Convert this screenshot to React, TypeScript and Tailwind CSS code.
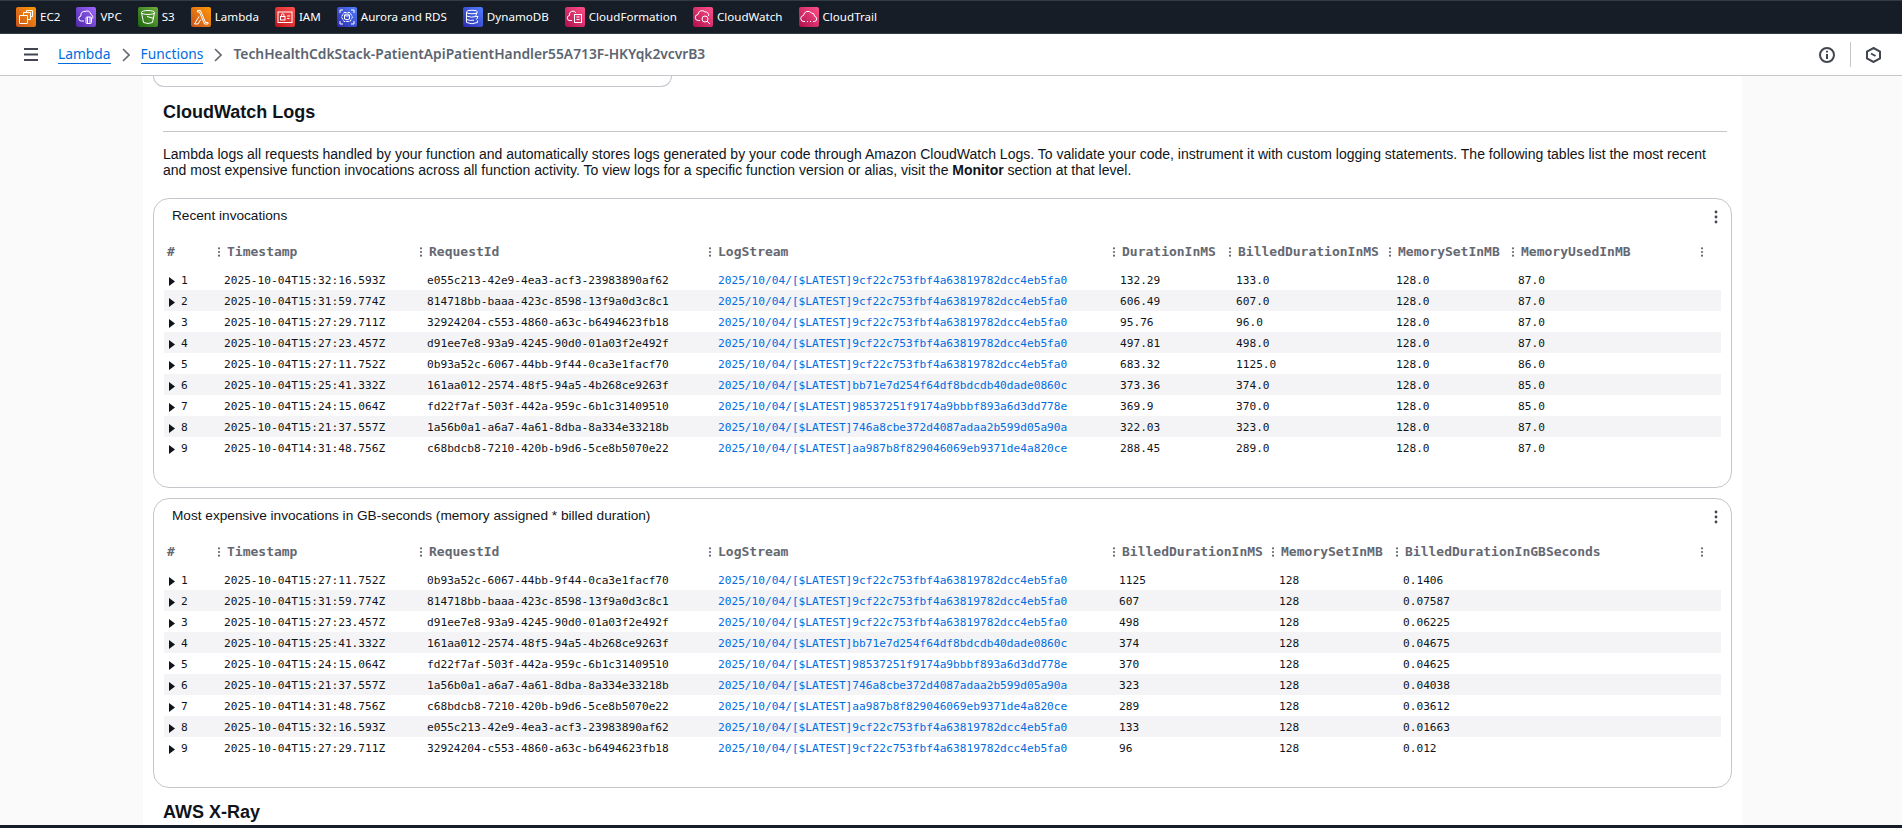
import React from 'react';

const services = [
    {
        name: 'EC2',
        bg: 'from-[#c8511b] to-[#ff9900]',
        icon: (
            <>
                <rect x="3.5" y="8.5" width="8" height="8" rx="0.5" />
                <path d="M7.5 8.5V5.5h7v7h-3M10.5 5.5V3.5h6v6h-2" />
            </>
        ),
    },
    {
        name: 'VPC',
        bg: 'from-[#4d27a8] to-[#a166ff]',
        icon: (
            <>
                <path d="M8 14H5.5a2.5 2.5 0 0 1-.5-5 3.5 3.5 0 0 1 4-4.5 4 4 0 0 1 6 3 2.8 2.8 0 0 1 1.5 4" />
                <rect x="10" y="10" width="5.5" height="6.5" rx="1" />
                <path d="M11.5 10V16.5M14 10V16.5" />
            </>
        ),
    },
    {
        name: 'S3',
        bg: 'from-[#1b660f] to-[#6cae3e]',
        icon: (
            <>
                <ellipse cx="10" cy="5.5" rx="6.5" ry="2" />
                <path d="M3.5 5.5L5.5 15.5Q10 17.5 14.5 15.5L16.5 5.5" />
                <path d="M9 9.5l7 2" />
            </>
        ),
    },
    {
        name: 'Lambda',
        bg: 'from-[#c8511b] to-[#ff9900]',
        icon: <path d="M6.5 3.5H9.5L14.5 15.5H17V17H13.5L8.5 5H6.5ZM8 9.5L3.5 17H7L9.8 12.5" />,
    },
    {
        name: 'IAM',
        bg: 'from-[#bd0816] to-[#ff5252]',
        icon: (
            <>
                <rect x="3" y="5" width="14" height="10.5" />
                <rect x="5.5" y="9.5" width="4.5" height="3.5" />
                <path d="M6.5 9.5V8a1.2 1.2 0 0 1 2.5 0v1.5M12 9h3M12 11.5h2.5" />
            </>
        ),
    },
    {
        name: 'Aurora and RDS',
        bg: 'from-[#2e27ad] to-[#527fff]',
        icon: (
            <>
                <path d="M3 6V3h3M14 3h3v3M3 14v3h3M14 17h3v-3" />
                <path d="M7 5.5h6l2.5 4.5-2.5 4.5H7L4.5 10Z" strokeDasharray="2.5 1" />
                <ellipse cx="10" cy="8" rx="2.5" ry="1" />
                <path d="M7.5 8v4q2.5 1.5 5 0V8" />
            </>
        ),
    },
    {
        name: 'DynamoDB',
        bg: 'from-[#2e27ad] to-[#527fff]',
        icon: (
            <>
                <ellipse cx="9" cy="5" rx="5.5" ry="1.8" />
                <path d="M3.5 5v10.5q5.5 2.5 11 0v-2M3.5 9q5.5 2 9 .5M3.5 12.5q4 1.5 7.5.7" />
                <path d="M14 5.5l-1.5 4h2.5l-1.5 3" />
            </>
        ),
    },
    {
        name: 'CloudFormation',
        bg: 'from-[#b0084d] to-[#ff4f8b]',
        icon: (
            <>
                <path d="M7 13.5H5a2.5 2.5 0 0 1-.5-5A3.5 3.5 0 0 1 11 6" />
                <rect x="9.5" y="7.5" width="7" height="8" />
                <path d="M11.5 10h3M11.5 12.5h3" />
            </>
        ),
    },
    {
        name: 'CloudWatch',
        bg: 'from-[#b0084d] to-[#ff4f8b]',
        icon: (
            <>
                <path d="M7 13.5H5.5a3 3 0 0 1-.5-6A4 4 0 0 1 12 5a3 3 0 0 1 3.5 4" />
                <circle cx="12" cy="12" r="3" />
                <path d="M14.2 14.2L17 17" />
            </>
        ),
    },
    {
        name: 'CloudTrail',
        bg: 'from-[#b0084d] to-[#ff4f8b]',
        icon: (
            <path
                d="M6 14.5H5a3 3 0 0 1-.5-6A4.5 4.5 0 0 1 12.5 6a3 3 0 0 1 3 3.2 2.7 2.7 0 0 1 0 5.3H14M8 14.5h1M11 14.5h1"
            />
        ),
    },
];

const stream1 = '2025/10/04/[$LATEST]9cf22c753fbf4a63819782dcc4eb5fa0';
const stream2 = '2025/10/04/[$LATEST]bb71e7d254f64df8bdcdb40dade0860c';
const stream3 = '2025/10/04/[$LATEST]98537251f9174a9bbbf893a6d3dd778e';
const stream4 = '2025/10/04/[$LATEST]746a8cbe372d4087adaa2b599d05a90a';
const stream5 = '2025/10/04/[$LATEST]aa987b8f829046069eb9371de4a820ce';

const recentRows = [
    ['2025-10-04T15:32:16.593Z', 'e055c213-42e9-4ea3-acf3-23983890af62', stream1, '132.29', '133.0', '128.0', '87.0'],
    ['2025-10-04T15:31:59.774Z', '814718bb-baaa-423c-8598-13f9a0d3c8c1', stream1, '606.49', '607.0', '128.0', '87.0'],
    ['2025-10-04T15:27:29.711Z', '32924204-c553-4860-a63c-b6494623fb18', stream1, '95.76', '96.0', '128.0', '87.0'],
    ['2025-10-04T15:27:23.457Z', 'd91ee7e8-93a9-4245-90d0-01a03f2e492f', stream1, '497.81', '498.0', '128.0', '87.0'],
    ['2025-10-04T15:27:11.752Z', '0b93a52c-6067-44bb-9f44-0ca3e1facf70', stream1, '683.32', '1125.0', '128.0', '86.0'],
    ['2025-10-04T15:25:41.332Z', '161aa012-2574-48f5-94a5-4b268ce9263f', stream2, '373.36', '374.0', '128.0', '85.0'],
    ['2025-10-04T15:24:15.064Z', 'fd22f7af-503f-442a-959c-6b1c31409510', stream3, '369.9', '370.0', '128.0', '85.0'],
    ['2025-10-04T15:21:37.557Z', '1a56b0a1-a6a7-4a61-8dba-8a334e33218b', stream4, '322.03', '323.0', '128.0', '87.0'],
    ['2025-10-04T14:31:48.756Z', 'c68bdcb8-7210-420b-b9d6-5ce8b5070e22', stream5, '288.45', '289.0', '128.0', '87.0'],
];

const expensiveRows = [
    ['2025-10-04T15:27:11.752Z', '0b93a52c-6067-44bb-9f44-0ca3e1facf70', stream1, '1125', '128', '0.1406'],
    ['2025-10-04T15:31:59.774Z', '814718bb-baaa-423c-8598-13f9a0d3c8c1', stream1, '607', '128', '0.07587'],
    ['2025-10-04T15:27:23.457Z', 'd91ee7e8-93a9-4245-90d0-01a03f2e492f', stream1, '498', '128', '0.06225'],
    ['2025-10-04T15:25:41.332Z', '161aa012-2574-48f5-94a5-4b268ce9263f', stream2, '374', '128', '0.04675'],
    ['2025-10-04T15:24:15.064Z', 'fd22f7af-503f-442a-959c-6b1c31409510', stream3, '370', '128', '0.04625'],
    ['2025-10-04T15:21:37.557Z', '1a56b0a1-a6a7-4a61-8dba-8a334e33218b', stream4, '323', '128', '0.04038'],
    ['2025-10-04T14:31:48.756Z', 'c68bdcb8-7210-420b-b9d6-5ce8b5070e22', stream5, '289', '128', '0.03612'],
    ['2025-10-04T15:32:16.593Z', 'e055c213-42e9-4ea3-acf3-23983890af62', stream1, '133', '128', '0.01663'],
    ['2025-10-04T15:27:29.711Z', '32924204-c553-4860-a63c-b6494623fb18', stream1, '96', '128', '0.012'],
];

function Kebab({ large }: { large?: boolean }) {
    if (large) {
        return (
            <svg width="4" height="14" viewBox="0 0 4 14" className="shrink-0 text-[#424650]" fill="currentColor">
                <circle cx="2" cy="2" r="1.4" />
                <circle cx="2" cy="7" r="1.4" />
                <circle cx="2" cy="12" r="1.4" />
            </svg>
        );
    }
    return (
        <svg width="4" height="10" viewBox="0 0 4 10" className="shrink-0 text-[#656871]" fill="currentColor">
            <circle cx="2" cy="1.3" r="1.1" />
            <circle cx="2" cy="5" r="1.1" />
            <circle cx="2" cy="8.7" r="1.1" />
        </svg>
    );
}

function LogTable({
    columns,
    rows,
    headGrid,
    rowGrid,
}: {
    columns: string[];
    rows: string[][];
    headGrid: string;
    rowGrid: string;
}) {
    return (
        <div className="mt-[18px] font-['DejaVu_Sans_Mono',monospace]">
            <div className={`grid h-[20px] items-center text-[13px] font-bold text-[#656871] ${headGrid}`}>
                <span className="pl-[3px]">#</span>
                {columns.map((col) => (
                    <span key={col} className="flex items-center gap-[6px] whitespace-nowrap">
                        <Kebab />
                        {col}
                    </span>
                ))}
                <Kebab />
            </div>
            <div className="mt-[7px]">
                {rows.map((row, i) => (
                    <div
                        key={row[1]}
                        className={`grid h-[21px] items-center pt-[3px] text-[11.16px] text-[#0f141a] ${rowGrid} ${i % 2 === 1 ? 'bg-[#f4f4f6]' : ''}`}
                    >
                        <span className="flex items-center gap-[6px] pl-[5px] pt-[1px]">
                            <svg width="6" height="9" viewBox="0 0 6 9" fill="#0f141a" className="shrink-0">
                                <path d="M0 0L6 4.5L0 9Z" />
                            </svg>
                            {i + 1}
                        </span>
                        {row.map((cell, j) => (
                            <span key={j} className={`whitespace-nowrap ${j === 2 ? 'text-[#006ce0]' : ''}`}>
                                {cell}
                            </span>
                        ))}
                    </div>
                ))}
            </div>
        </div>
    );
}

function LogCard({ title, children }: { title: string; children: React.ReactNode }) {
    return (
        <section className="h-[290px] rounded-2xl border border-[#c6c6cd] px-[10px] pt-[9px]">
            <div className="flex h-[16px] items-start justify-between pl-[8px] pr-[3px]">
                <h3 className="text-[13.65px] leading-[16px] text-[#0f141a]">{title}</h3>
                <span className="mt-[2px]">
                    <Kebab large />
                </span>
            </div>
            {children}
        </section>
    );
}

export default function App() {
    return (
        <div className="flex h-screen flex-col overflow-hidden bg-[#fafafa] font-['Liberation_Sans',Arial,sans-serif]">
            <nav className="flex h-[34px] shrink-0 items-center gap-4 border-y border-y-[#333b45] bg-[#161d26] pl-4 font-['Noto_Sans',sans-serif] text-[11.6px] text-white">
                {services.map((s) => (
                    <a key={s.name} className="flex items-center gap-1 whitespace-nowrap">
                        <span className={`flex h-5 w-5 items-center justify-center rounded-[2px] bg-linear-to-tr ${s.bg}`}>
                            <svg width="20" height="20" viewBox="0 0 20 20" fill="none" stroke="white" strokeWidth="1">
                                {s.icon}
                            </svg>
                        </span>
                        {s.name}
                    </a>
                ))}
            </nav>

            <header className="flex h-[42px] shrink-0 items-center border-b border-[#c6c6cd] bg-white pl-6 pr-[21px] font-['Noto_Sans',sans-serif] text-[13.8px]">
                <svg width="14" height="13" viewBox="0 0 14 13" className="mr-5 shrink-0" stroke="#424650" strokeWidth="2">
                    <path d="M0 1h14M0 6.5h14M0 12h14" />
                </svg>
                <a className="border-b border-[#006ce0] leading-[18px] text-[#006ce0]">Lambda</a>
                <svg width="8" height="14" viewBox="0 0 8 14" className="mx-[11px] shrink-0" fill="none" stroke="#656871" strokeWidth="1.6">
                    <path d="M1 1l6 6-6 6" />
                </svg>
                <a className="border-b border-[#006ce0] leading-[18px] text-[#006ce0]">Functions</a>
                <svg width="8" height="14" viewBox="0 0 8 14" className="mx-[11px] shrink-0" fill="none" stroke="#656871" strokeWidth="1.6">
                    <path d="M1 1l6 6-6 6" />
                </svg>
                <span className="font-semibold text-[#5b6470]">TechHealthCdkStack-PatientApiPatientHandler55A713F-HKYqk2vcvrB3</span>
                <div className="ml-auto flex items-center">
                    <svg width="16" height="16" viewBox="0 0 16 16" fill="none" stroke="#424650" strokeWidth="2">
                        <circle cx="8" cy="8" r="7" />
                        <path d="M8 7v5M8 3.8v1.6" />
                    </svg>
                    <span className="mx-[15px] h-[25px] w-px bg-[#c6c6cd]" />
                    <svg width="15" height="16" viewBox="0 0 15 16" fill="none" stroke="#424650" strokeWidth="2">
                        <path d="M7.5 1L14 4.5v7L7.5 15 1 11.5v-7Z" />
                        <path d="M5 6.5L9.5 9" />
                    </svg>
                </div>
            </header>

            <main className="ml-[143px] min-h-0 w-[1599px] flex-1 overflow-hidden bg-white px-[10px]">
                <div className="h-[11px] w-[519px] rounded-b-2xl border border-t-0 border-[#c6c6cd]" />

                <div className="pl-[10px] pr-[5px]">
                    <h2 className="mt-[13px] border-b border-[#c6c6cd] pb-[7px] text-[18px] leading-[24px] font-bold text-[#0f141a]">CloudWatch Logs</h2>
                    <p className="mt-[14px] text-[14px] leading-[16px] text-[#0f141a]">
                        Lambda logs all requests handled by your function and automatically stores logs generated by your code through Amazon CloudWatch Logs. To validate your code, instrument it with custom logging statements. The following tables list the most recent and most expensive function invocations across all function activity. To view logs for a specific function version or alias, visit the <b>Monitor</b> section at that level.
                    </p>
                </div>

                <div className="mt-[20px] flex flex-col gap-[10px]">
                    <LogCard title="Recent invocations">
                        <LogTable
                            columns={['Timestamp', 'RequestId', 'LogStream', 'DurationInMS', 'BilledDurationInMS', 'MemorySetInMB', 'MemoryUsedInMB']}
                            rows={recentRows}
                            headGrid="grid-cols-[53px_202px_289px_404px_116px_160px_123px_189px_7px]"
                            rowGrid="grid-cols-[60px_203px_291px_402px_116px_160px_122px_189px]"
                        />
                    </LogCard>
                    <LogCard title="Most expensive invocations in GB-seconds (memory assigned * billed duration)">
                        <LogTable
                            columns={['Timestamp', 'RequestId', 'LogStream', 'BilledDurationInMS', 'MemorySetInMB', 'BilledDurationInGBSeconds']}
                            rows={expensiveRows}
                            headGrid="grid-cols-[53px_202px_289px_404px_159px_124px_305px_7px]"
                            rowGrid="grid-cols-[60px_203px_291px_401px_160px_124px_304px]"
                        />
                    </LogCard>
                </div>

                <h2 className="mt-[12px] px-[10px] text-[18px] leading-[24px] font-bold text-[#0f141a]">AWS X-Ray</h2>
            </main>

            <div className="h-[3px] shrink-0 bg-[#161d26]" />
        </div>
    );
}
